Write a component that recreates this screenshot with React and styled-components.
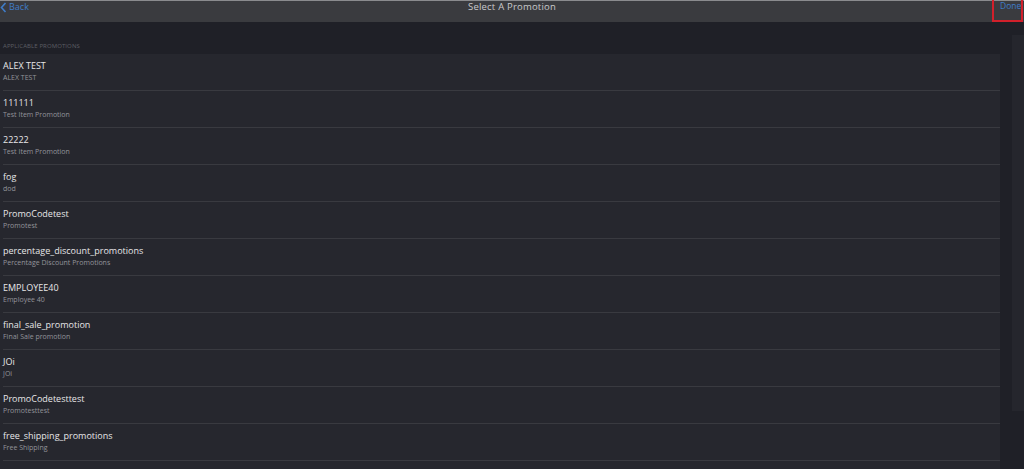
import React from 'react';
import styled, { createGlobalStyle } from 'styled-components';

const promotions = [
  { title: 'ALEX TEST', desc: 'ALEX TEST' },
  { title: '111111', desc: 'Test Item Promotion' },
  { title: '22222', desc: 'Test Item Promotion' },
  { title: 'fog', desc: 'dod' },
  { title: 'PromoCodetest', desc: 'Promotest' },
  { title: 'percentage_discount_promotions', desc: 'Percentage Discount Promotions' },
  { title: 'EMPLOYEE40', desc: 'Employee 40' },
  { title: 'final_sale_promotion', desc: 'Final Sale promotion' },
  { title: 'JOi', desc: 'JOi' },
  { title: 'PromoCodetesttest', desc: 'Promotesttest' },
  { title: 'free_shipping_promotions', desc: 'Free Shipping' },
  { title: 'PromoCodetesttest1', desc: 'Promotesttest1' },
];

const App = () => {
  return (
    <Page>
      <GlobalStyle />
      <Header>
        <BackButton>
          <svg width="7" height="11" viewBox="0 0 7 11">
            <polyline points="5.5,1 1.5,5.5 5.5,10" fill="none" stroke="#3f7cc8" strokeWidth="1.6" />
          </svg>
          Back
        </BackButton>
        <Title>Select A Promotion</Title>
        <DoneButton>Done</DoneButton>
      </Header>
      <Body>
        <List>
          <SectionLabel>Applicable Promotions</SectionLabel>
          {promotions.map((p) => (
            <Row key={p.title}>
              <RowTitle>{p.title}</RowTitle>
              <RowDesc>{p.desc}</RowDesc>
            </Row>
          ))}
        </List>
        <Gutter>
          <Thumb />
        </Gutter>
      </Body>
    </Page>
  );
};

const GlobalStyle = createGlobalStyle`
  html, body, #root {
    margin: 0;
    height: 100%;
    overflow: hidden;
    background: #1f2027;
  }
  * {
    box-sizing: border-box;
  }
`;

const Page = styled.div`
  height: 100%;
  display: flex;
  flex-direction: column;
  font-family: 'Open Sans', 'Noto Sans', sans-serif;
`;

const Header = styled.header`
  height: 22px;
  flex-shrink: 0;
  background: #3a3b3f;
  border-top: 1px solid #8a8b8e;

  display: grid;
  grid-template-columns: 1fr auto 1fr;
  align-items: start;
`;

const BackButton = styled.div`
  display: flex;
  align-items: center;
  gap: 2px;
  height: 12px;
  color: #3f7cc8;
  font-size: 9px;
  line-height: 12px;
`;

const Title = styled.h1`
  margin: 0;
  color: #c9c9cb;
  font-size: 9.5px;
  font-weight: 400;
  line-height: 12px;
  letter-spacing: 0.2px;
`;

const DoneButton = styled.div`
  justify-self: end;
  width: 31px;
  height: 22px;
  margin: -1px 1px 0 0;
  padding-left: 6px;
  border: 2px solid #d1202b;
  border-top: none;
  color: #3f7cc8;
  font-size: 8.5px;
  line-height: 12px;
  white-space: nowrap;
  overflow: visible;
`;

const Body = styled.div`
  flex: 1;
  min-height: 0;
  display: flex;
`;

const List = styled.div`
  width: 1000px;
  display: flex;
  flex-direction: column;
`;

const SectionLabel = styled.div`
  height: 32px;
  padding: 20px 0 0 3px;
  color: #5d5e64;
  font-size: 6px;
  text-transform: uppercase;
  letter-spacing: 0.1px;
  flex-shrink: 0;
`;

const Row = styled.div`
  height: 37px;
  flex-shrink: 0;
  padding: 6px 0 0 3px;
  background: #26272e;
  background-image: linear-gradient(#393a40, #393a40);
  background-size: calc(100% - 3px) 1px;
  background-position: 3px 100%;
  background-repeat: no-repeat;
  display: flex;
  flex-direction: column;
`;

const RowTitle = styled.div`
  color: #e6e6e8;
  font-size: 9px;
  line-height: 12px;
`;

const RowDesc = styled.div`
  color: #93949a;
  font-size: 7px;
  line-height: 11px;
`;

const Gutter = styled.div`
  flex: 1;
  padding: 13px 0 0 12px;
  background: #1f2027;
`;

const Thumb = styled.div`
  height: 376px;
  background: #25262d;
`;

export default App;
